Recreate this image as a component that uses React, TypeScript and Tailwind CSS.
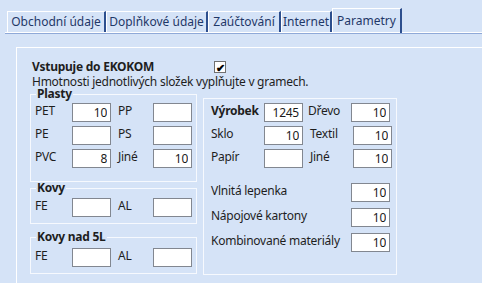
const tabs = [
    { label: "Obchodní údaje", w: "w-[99px]" },
    { label: "Doplňkové údaje", w: "w-[102px]" },
    { label: "Zaúčtování", w: "w-[73px]" },
    { label: "Internet", w: "w-[51px]" },
];

function Field({ value = "", className = "" }: { value?: string; className?: string }) {
    return (
        <input
            readOnly
            value={value}
            className={`h-[19px] w-[39px] shrink-0 border border-[#828790] bg-white pr-[3px] text-right text-[12px] leading-[17px] text-[#1a1a1a] outline-none ${className}`}
        />
    );
}

function Row({ a, av, b, bv, aw = "w-[37px]", bw = "w-[35px]" }: { a: string; av?: string; b: string; bv?: string; aw?: string; bw?: string }) {
    return (
        <div className="flex h-[19px] items-start">
            <span className={`${aw} shrink-0 leading-[16px]`}>{a}</span>
            <Field value={av} />
            <span className={`ml-[7px] ${bw} shrink-0 leading-[16px]`}>{b}</span>
            <Field value={bv} />
        </div>
    );
}

function Group({ title, children, className = "" }: { title: string; children: React.ReactNode; className?: string }) {
    return (
        <fieldset className={`border border-[#f6f9fe] px-[4px] ${className}`}>
            <legend className="ml-px px-px font-bold leading-[12px]">{title}</legend>
            {children}
        </fieldset>
    );
}

export default function App() {
    return (
        <div className="flex h-[283px] w-[482px] flex-col overflow-hidden bg-[#d5e3f7] font-['Noto_Sans',sans-serif] text-[12px] tracking-[-0.25px] text-[#1e1e1e]">
            {/* zalozky */}
            <div className="ml-[5px] flex h-[33px] shrink-0 items-end border-b border-white pl-[2px] shadow-[0_1px_0_#8fa9d8]">
                {tabs.map((t) => (
                    <div
                        key={t.label}
                        className={`${t.w} flex h-[21px] items-center justify-center border-t border-l border-r-2 border-t-white border-l-white border-r-[#2d4f8e] tracking-normal text-[#1f3868]`}
                    >
                        {t.label}
                    </div>
                ))}
                <div className="mb-[-1px] flex h-[25px] w-[70px] items-start justify-center border-t border-l border-r-2 border-t-white border-l-white border-r-[#2d4f8e] pt-[3px] tracking-normal text-[#1f3868]">
                    Parametry
                </div>
            </div>

            {/* panel */}
            <div className="ml-[16px] mt-[14px] flex-1 border-t border-l border-white pl-[15px] pt-[12px]">
                <div className="flex items-start leading-[14px]">
                    <span className="w-[182px] font-bold">Vstupuje do EKOKOM</span>
                    <span className="mt-px flex h-[12px] w-[12px] items-center justify-center border border-[#707070] bg-white text-[11px] font-bold leading-none text-black">
                        ✔
                    </span>
                </div>
                <div className="mt-px leading-[13px]">Hmotnosti jednotlivých složek vyplňujte v gramech.</div>

                <div className="ml-[-2px] flex items-start">
                    <div className="flex w-[166px] flex-col">
                        <Group title="Plasty" className="pb-[13px]">
                            <div className="mt-[3px] flex flex-col gap-[4px]">
                                <Row a="PET" av="10" b="PP" />
                                <Row a="PE" b="PS" />
                                <Row a="PVC" av="8" b="Jiné" bv="10" />
                            </div>
                        </Group>
                        <Group title="Kovy" className="pb-[6px]">
                            <div className="mt-[4px]">
                                <Row a="FE" b="AL" />
                            </div>
                        </Group>
                        <Group title="Kovy nad 5L" className="mt-[7px] pb-[6px]">
                            <div className="mt-[5px]">
                                <Row a="FE" b="AL" />
                            </div>
                        </Group>
                    </div>

                    <div className="ml-[7px] mt-[10px] w-[194px] border border-[#f6f9fe] pl-[7px] pt-[4px] pb-[22px]">
                        <div className="flex flex-col gap-[4px]">
                            <div className="flex h-[19px] items-start">
                                <span className="w-[53px] shrink-0 font-bold leading-[16px]">Výrobek</span>
                                <Field value="1245" />
                                <span className="ml-[5px] w-[43px] shrink-0 leading-[16px]">Dřevo</span>
                                <Field value="10" />
                            </div>
                            <Row a="Sklo" av="10" b="Textil" bv="10" aw="w-[53px]" bw="w-[43px]" />
                            <Row a="Papír" b="Jiné" bv="10" aw="w-[53px]" bw="w-[43px]" />
                        </div>
                        <div className="mt-[15px] flex flex-col gap-[6px]">
                            {["Vlnitá lepenka", "Nápojové kartony", "Kombinované materiály"].map((l) => (
                                <div key={l} className="flex h-[19px] items-start">
                                    <span className="w-[140px] shrink-0 leading-[16px]">{l}</span>
                                    <Field value="10" />
                                </div>
                            ))}
                        </div>
                    </div>
                </div>
            </div>
        </div>
    );
}
